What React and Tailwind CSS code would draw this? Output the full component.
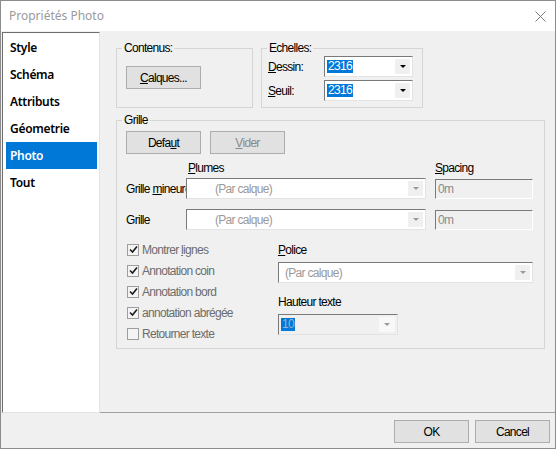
import React from 'react';

const ui = "font-['Liberation_Sans',Arial,sans-serif] text-[12px] tracking-[-0.7px]";

function Btn({ children, disabled, className = '' }) {
  return (
    <div
      className={`flex h-[23px] w-[75px] items-center justify-center border border-[#adadad] bg-[#e1e1e1] ${
        disabled ? 'text-[#8a8a8a]' : 'text-black'
      } ${className}`}
    >
      {children}
    </div>
  );
}

function Arrow({ gray, box = 'w-[15px] bg-[#f0f0f0]' }) {
  return (
    <span className={`ml-auto mr-[2px] flex h-[15px] items-center justify-center ${box}`}>
      <span
        className={`h-0 w-0 border-x-[3px] border-t-[3px] border-x-transparent ${
          gray ? 'border-t-[#9a9a9a]' : 'border-t-black'
        }`}
      />
    </span>
  );
}

function Combo({ children, gray, className = '', bg = 'bg-white', box }) {
  return (
    <div
      className={`relative z-10 flex h-[21px] items-center border border-t-[#7a7a7a] border-l-[#7a7a7a] border-r-[#e3e3e3] border-b-[#e3e3e3] ${bg} ${className}`}
    >
      {children}
      <Arrow gray={gray} box={box} />
    </div>
  );
}

function Field({ children }) {
  return (
    <div className="flex h-[20px] w-[98px] items-center border border-t-[#7a7a7a] border-l-[#7a7a7a] border-r-white border-b-white bg-[#f0f0f0] pl-[2px] text-[#8a8a8a]">
      {children}
    </div>
  );
}

function Check({ label, checked }) {
  return (
    <div className="flex h-[21px] items-center gap-[3px] text-[#6d6d6d]">
      <span className="flex h-[12px] w-[12px] items-center justify-center border border-[#9e9e9e] bg-[#f4f4f4]">
        {checked ? (
          <svg width="9" height="9" viewBox="0 0 9 9">
            <path d="M1 4.5 L3.5 7 L8 1.5" fill="none" stroke="#1a1a1a" strokeWidth="1.6" />
          </svg>
        ) : null}
      </span>
      <span>{label}</span>
    </div>
  );
}

function Group({ label, className = '', children }) {
  return (
    <div className={`relative border border-[#d5d5d5] ${className}`}>
      <span className="absolute -top-[8px] left-[5px] bg-[#f0f0f0] px-[2px] leading-[14px] text-black">{label}</span>
      {children}
    </div>
  );
}

const tabs = ['Style', 'Schéma', 'Attributs', 'Géometrie', 'Photo', 'Tout'];

export default function App() {
  return (
    <div className="flex h-[449px] w-[556px] flex-col border border-[#8c8c8c] bg-[#f0f0f0]">
      <div className="flex h-[30px] items-center justify-between bg-white pl-[8px] pr-[9px]">
        <span className="font-['Noto_Sans',sans-serif] text-[12px] text-[#9a9a9a]">Propriétés Photo</span>
        <svg width="11" height="11" viewBox="0 0 11 11">
          <path d="M0.5 0.5 L10.5 10.5 M10.5 0.5 L0.5 10.5" stroke="#7a7a7a" strokeWidth="1" />
        </svg>
      </div>

      <div className="flex h-[382px]">
        <div className="ml-[1px] mt-[1px] flex w-[98px] flex-col border border-t-[#6e6e6e] border-l-[#6e6e6e] border-r-[#e3e3e3] border-b-[#e3e3e3] bg-white pt-[1px]">
          {tabs.map((t) => (
            <div
              key={t}
              className={`ml-[3px] mr-[2px] flex h-[27px] items-center pl-[4px] font-['Noto_Sans',sans-serif] text-[12px] font-semibold tracking-[-0.3px] ${
                t === 'Photo' ? 'bg-[#0078d7] text-white' : 'text-black'
              }`}
            >
              {t}
            </div>
          ))}
        </div>

        <div className={`flex-1 border-b border-[#a0a0a0] pl-[16px] pt-[17px] ${ui}`}>
          <div className="flex gap-[8px]">
            <Group label="Contenus:" className="h-[60px] w-[137px] pl-[9px] pt-[17px]">
              <Btn>
                <span>
                  <u>C</u>alques...
                </span>
              </Btn>
            </Group>
            <Group label="Echelles:" className="flex h-[60px] w-[162px] flex-col gap-[3px] pl-[6px] pt-[7px]">
              <div className="flex items-center">
                <span className="w-[56px]">
                  <u>D</u>essin:
                </span>
                <Combo className="w-[89px]">
                  <span className="ml-[2px] bg-[#0078d7] px-[1px] leading-[13px] text-white">2316</span>
                </Combo>
              </div>
              <div className="flex items-center">
                <span className="w-[56px]">
                  <u>S</u>euil:
                </span>
                <Combo className="w-[89px]">
                  <span className="ml-[2px] bg-[#0078d7] px-[1px] leading-[13px] text-white">2316</span>
                </Combo>
              </div>
            </Group>
          </div>

          <Group label="Grille" className="mt-[12px] h-[229px] w-[429px] pl-[9px] pt-[10px]">
            <div className="flex gap-[9px]">
              <Btn>
                <span>
                  Defa<u>u</u>t
                </span>
              </Btn>
              <Btn disabled>
                <span>
                  <u>V</u>ider
                </span>
              </Btn>
            </div>

            <div className="mt-[7px] flex leading-[14px]">
              <span className="ml-[62px] w-[247px]">
                <u>P</u>lumes
              </span>
              <span>
                <u>S</u>pacing
              </span>
            </div>

            <div className="mt-[3px] flex items-center">
              <span className="w-[60px] whitespace-nowrap">
                Grille <u>m</u>ineure
              </span>
              <Combo gray className="w-[240px]">
                <span className="ml-[28px] text-[#9a9a9a]">(Par calque)</span>
              </Combo>
              <div className="ml-[9px]">
                <Field>0m</Field>
              </div>
            </div>

            <div className="mt-[10px] flex items-center">
              <span className="w-[60px]">Grille</span>
              <Combo gray className="w-[240px]">
                <span className="ml-[28px] text-[#9a9a9a]">(Par calque)</span>
              </Combo>
              <div className="ml-[9px]">
                <Field>0m</Field>
              </div>
            </div>

            <div className="mt-[9px] flex">
              <div className="ml-[1px] flex w-[151px] flex-col">
                <Check
                  checked
                  label={
                    <span>
                      Montrer <u>l</u>ignes
                    </span>
                  }
                />
                <Check checked label="Annotation coin" />
                <Check checked label="Annotation bord" />
                <Check checked label="annotation abrégée" />
                <Check label="Retourner texte" />
              </div>
              <div className="flex flex-col">
                <span className="mt-[4px] leading-[14px]">
                  <u>P</u>olice
                </span>
                <Combo gray className="mt-[5px] w-[255px]">
                  <span className="ml-[6px] text-[#9a9a9a]">(Par calque)</span>
                </Combo>
                <span className="mt-[12px] leading-[14px]">Hauteur texte</span>
                <Combo gray className="mt-[5px] w-[120px]" bg="bg-[#f0f0f0]" box="w-[16px] bg-[#f8f8f8]">
                  <span className="ml-[2px] bg-[#0078d7] px-[1px] leading-[13px] text-[#9fb3cc]">10</span>
                </Combo>
              </div>
            </div>
          </Group>
        </div>
      </div>

      <div className={`flex justify-end gap-[6px] pr-[5px] pt-[7px] ${ui}`}>
        <Btn>OK</Btn>
        <Btn>Cancel</Btn>
      </div>
    </div>
  );
}
